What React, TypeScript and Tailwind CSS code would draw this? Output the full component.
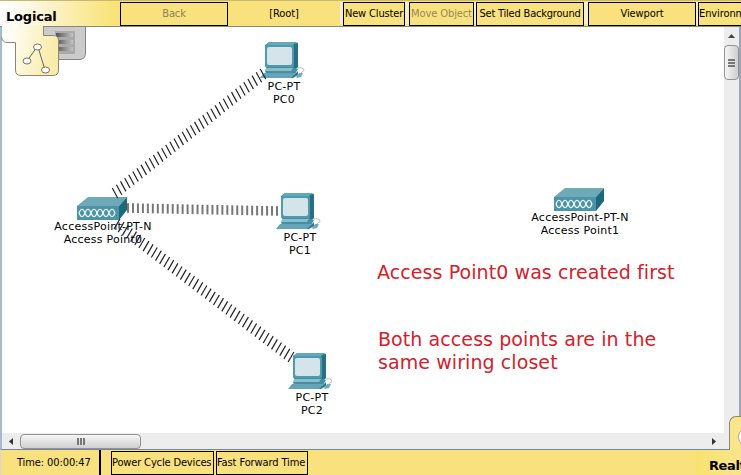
import type { ReactNode } from 'react';

const tahoma = "font-['DejaVu_Sans_Condensed','DejaVu_Sans',sans-serif] [font-stretch:condensed]";
const verdana = "font-['DejaVu_Sans',sans-serif] [font-stretch:normal]";

function BarButton({ className, children }: { className: string; children: ReactNode }) {
  return (
    <div className={`flex h-6 shrink-0 items-center justify-center overflow-hidden border border-black bg-[#f9e27d] pt-px whitespace-nowrap ${className}`}>
      {children}
    </div>
  );
}

function Node({ className, name, model, children }: { className: string; name: string; model: string; children: ReactNode }) {
  return (
    <div className={`absolute flex flex-col items-center text-center text-[11px] leading-[13px] tracking-[0.25px] whitespace-nowrap text-black ${className}`}>
      {children}
      <span className="relative left-px">{model}</span>
      <span className="relative left-px">{name}</span>
    </div>
  );
}

function Computer() {
  return (
    <svg width="46" height="38" viewBox="0 0 46 38" className="shrink-0">
      <path d="M5 3 9 0H35L38 1V25L34 28H8L5 24Z" fill="#3d8ca0" />
      <path d="M6 3 9 0H36L33 3Z" fill="#64a9b9" />
      <path d="M33 3 38 1V25L34 28Z" fill="#286f82" />
      <rect x="5" y="3" width="29" height="22" rx="2" fill="#4f9bad" />
      <rect x="7" y="5" width="25" height="18" rx="2" fill="#d4e4ea" />
      <path d="M9 25H32L38 27L35 32H6L5 29Z" fill="#438fa3" />
      <path d="M6 26H33L31 29H5Z" fill="#8bbdca" />
      <path d="M4 31H36L32 36H0Z" fill="#65a4b7" />
      <path d="M36 31 38 29V33L33 36H31Z" fill="#32788d" />
      <path d="M38 26C44 25 46 28 41 31" fill="none" stroke="#a8bfca" />
      <path d="M39 31H43L41 35L37 36L36 35Z" fill="#72aaba" />
    </svg>
  );
}

function AccessPoint() {
  return (
    <svg width="50" height="23" viewBox="0 0 50 23" className="shrink-0">
      <path d="M0 9 11 0H50L42 9Z" fill="#6fa9b8" />
      <path d="M42 9 50 0V13L42 23Z" fill="#1c697c" />
      <path d="M0 9H42V23H0Z" fill="#4b93a6" />
      <path d="M2 16C4 11 6 11 8 16S12 21 14 16S18 11 20 16S24 21 26 16S30 11 32 16S36 21 38 16" fill="none" stroke="#f3fafb" strokeWidth="1.2" />
      <path d="M2 16C4 21 6 21 8 16S12 11 14 16S18 21 20 16S24 11 26 16S30 21 32 16S36 11 38 16" fill="none" stroke="#f3fafb" strokeWidth="1.2" />
    </svg>
  );
}

function Beam({ x1, y1, x2, y2, dx, dy, count, width, color }: {
  x1: number; y1: number; x2: number; y2: number; dx: number; dy: number; count: number; width: number; color: string;
}) {
  return (
    <g stroke={color} strokeWidth={width}>
      {Array.from({ length: count }, (_, i) => {
        const x = x1 + ((x2 - x1) * i) / (count - 1);
        const y = y1 + ((y2 - y1) * i) / (count - 1);
        return <line key={i} x1={x - dx} y1={y - dy} x2={x + dx} y2={y + dy} />;
      })}
    </g>
  );
}

function LogicalTab() {
  return (
    <svg width="90" height="78" viewBox="0 0 90 78" className="absolute top-0 left-0">
      <defs>
        <linearGradient id="tab" x1="0" x2="1" y2="0.2">
          <stop stopColor="#fffefb" />
          <stop offset="0.25" stopColor="#fffcf0" />
          <stop offset="1" stopColor="#f9eba8" />
        </linearGradient>
        <linearGradient id="rack" x1="0" x2="1">
          <stop stopColor="#555" />
          <stop offset="1" stopColor="#c4c4c4" />
        </linearGradient>
      </defs>
      <path d="M43.500 26.500H85.500V53Q85.500 59.500 79 59.500H43.500Z" fill="#cbcbcb" stroke="#858585" />
      <rect x="55" y="31" width="20" height="23" fill="#aaa" />
      <path d="M56 33H73V37H56ZM56 40H73V44H56ZM56 47H73V51H56Z" fill="url(#rack)" />
      <path d="M2 25H43V35H53Q58 35 58 40V70Q58 75 53 75H20Q15 75 15 70V42H6Q2 42 2 37Z" fill="url(#tab)" />
      <path d="M43.500 26V35.500H53Q58.500 35.500 58.500 40V70Q58.500 75.500 53 75.500H21Q15.500 75.500 15.500 70V42.500H7Q2 42 1.500 37" fill="none" stroke="#8c8877" />
      <path d="M37 47 27 61M38 47 45 70" stroke="#666" fill="none" />
      <g fill="#fff" stroke="#77736a">
        <ellipse cx="37.500" cy="47" rx="4" ry="3" />
        <ellipse cx="27" cy="61" rx="4" ry="3" />
        <ellipse cx="45.500" cy="70" rx="4" ry="3" />
      </g>
    </svg>
  );
}

export default function App() {
  return (
    <div className={`relative flex h-[475px] w-[741px] flex-col overflow-hidden bg-white text-[11px] tracking-[-0.1px] text-black ${tahoma}`}>
      <header className="flex h-[27px] shrink-0 border-t border-b border-t-[#c9b873] border-b-[#8c897b] bg-[#f9e27d] bg-[linear-gradient(90deg,#ffffff_0px,#fffaf0_20px,#f9e479_112px,#f9e27d_120px)]">
        <div className={`w-[120px] shrink-0 pt-[7px] pl-[6px] text-[13px] leading-[18px] font-bold ${verdana}`}>
          <span className="tracking-[-0.2px]">Logical</span>
        </div>
        <div className="flex items-start pt-px">
          <BarButton className="w-[108px] text-[#8c8257]">Back</BarButton>
          <div className="flex h-6 w-[112px] items-center justify-center pt-px">[Root]</div>
          <div className="h-[22px] w-[3px] bg-[#efeee2]" />
          <BarButton className="w-[62px] tracking-[-0.15px]">New Cluster</BarButton>
          <div className="h-[22px] w-1 bg-[#f6edc0]" />
          <BarButton className="w-[65px] text-[#948a5d]">Move Object</BarButton>
          <div className="h-[22px] w-[2px] bg-[#f3efd6]" />
          <BarButton className="w-[108px] tracking-[-0.2px]">Set Tiled Background</BarButton>
          <div className="h-[22px] w-1 bg-[#f5efcd]" />
          <BarButton className="w-[108px]">Viewport</BarButton>
          <div className="h-[22px] w-[2px] bg-[#f5efcd]" />
          <BarButton className="w-[70px] !justify-start">Environment</BarButton>
        </div>
      </header>

      <main className="flex h-[406px] shrink-0 border-l-2 border-[#a9bace]">
        <div className={`relative w-[722px] shrink-0 bg-white ${verdana}`}>
          <div className="absolute -top-[27px] -left-[2px]"><LogicalTab /></div>
          <Node className="top-[15px] left-[258px] w-[46px]" model="PC-PT" name="PC0"><Computer /></Node>
          <Node className="top-[166px] left-[274px] w-[46px]" model="PC-PT" name="PC1"><Computer /></Node>
          <Node className="top-[326px] left-[286px] w-[46px]" model="PC-PT" name="PC2"><Computer /></Node>
          <Node className="top-[170px] left-[49px] w-[102px]" model="AccessPoint-PT-N" name="Access Point0"><AccessPoint /></Node>
          <Node className="top-[161px] left-[526px] w-[102px]" model="AccessPoint-PT-N" name="Access Point1"><AccessPoint /></Node>
          <svg width="722" height="406" viewBox="2 27 722 406" className="absolute top-0 left-0">
            <Beam x1={115} y1={193} x2={263} y2={74} dx={2.7} dy={5} count={37} width={1.2} color="#222" />
            <Beam x1={128} y1={208} x2={277} y2={211} dx={0} dy={4.8} count={31} width={2} color="#777" />
            <Beam x1={117} y1={224} x2={291} y2={357} dx={-2.9} dy={5} count={43} width={1.2} color="#222" />
          </svg>
          <p className="absolute top-[231px] left-[375px] text-[19px] leading-7 tracking-[0.08px] whitespace-nowrap text-[#d4212b]">Access Point0 was created first</p>
          <p className="absolute top-[301px] left-[376px] text-[19px] leading-[23px] tracking-[0.08px] whitespace-nowrap text-[#d4212b]">
            Both access points are in the<br />same wiring closet
          </p>
        </div>
        <div className="flex w-[15px] shrink-0 flex-col items-center bg-[#ededed]">
          <div className="flex h-[18px] items-center">
            <svg width="7" height="4"><path d="M0 4 3.500 0 7 4Z" fill="#444" /></svg>
          </div>
          <div className="flex h-[35px] w-[15px] flex-col items-center justify-center gap-px rounded-sm border border-[#929292] bg-linear-to-r from-[#f6f6f6] to-[#cfcfcf]">
            <i className="h-[2px] w-[7px] bg-[#777]" /><i className="h-[2px] w-[7px] bg-[#777]" /><i className="h-[2px] w-[7px] bg-[#777]" />
          </div>
        </div>
        <div className="w-[2px] bg-[#9aa5b5]" />
      </main>

      <div className="flex h-[17px] shrink-0 items-center border-b border-l-2 border-b-[#77869a] border-l-[#a9bace] bg-[#ededed]">
        <div className="flex w-[18px] justify-center">
          <svg width="4" height="7"><path d="M4 0 0 3.500 4 7Z" fill="#333" /></svg>
        </div>
        <div className="flex h-[15px] w-[121px] items-center justify-center gap-px rounded-sm border border-[#929292] bg-linear-to-b from-[#f6f6f6] to-[#cfcfcf]">
          <i className="h-[7px] w-[2px] bg-[#777]" /><i className="h-[7px] w-[2px] bg-[#777]" /><i className="h-[7px] w-[2px] bg-[#777]" />
        </div>
        <div className="ml-[571px]"><svg width="4" height="7"><path d="M0 0 4 3.500 0 7Z" fill="#333" /></svg></div>
      </div>

      <footer className="flex h-[25px] shrink-0 border-l border-[#d1d8df] bg-[#f9e27d]">
        <div className="flex w-[98px] items-center pt-[2px] pl-4 whitespace-nowrap">Time: 00:00:47</div>
        <div className="w-[2px] bg-black" />
        <div className="ml-[10px] flex gap-[2px] pt-px">
          <BarButton className="w-[103px] !justify-start tracking-[-0.15px]">Power Cycle Devices</BarButton>
          <BarButton className="w-[92px] !justify-start tracking-[-0.1px]">Fast Forward Time</BarButton>
        </div>
      </footer>

      <div className={`absolute top-[450px] left-[696px] h-[25px] w-[45px] overflow-hidden bg-linear-to-r from-[#f8e26f] to-[#f9e58a] pt-[7px] pl-[13px] text-[13px] leading-[18px] font-bold tracking-[-0.4px] whitespace-nowrap ${verdana}`}>Realtime</div>
      <div className="absolute top-[416px] left-[729px] h-[34px] w-5 rounded-tl-[7px] border-t border-l border-[#8c8877] bg-[#f9e58a]">
        <div className="mt-[10px] ml-[8px] h-[20px] w-[20px] rounded-full border border-[#aaa] bg-white" />
      </div>
    </div>
  );
}
